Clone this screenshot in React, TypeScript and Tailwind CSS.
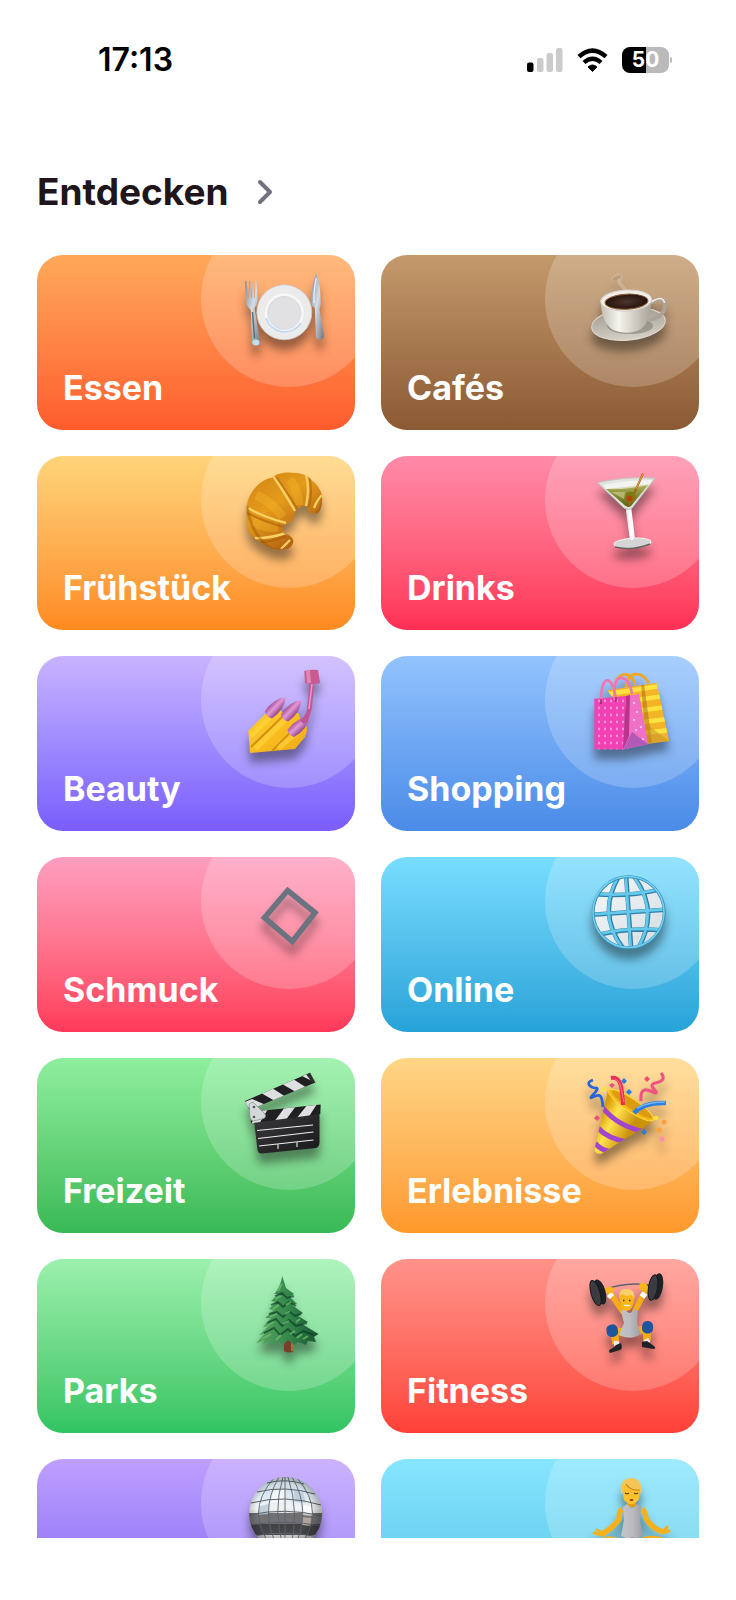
import type { ReactNode } from "react";

function SharedPaints() {
  return (
    <svg className="absolute size-0" aria-hidden="true">
      <defs>
        <linearGradient id="steel" x1="0" y1="0" x2="1" y2="1">
          <stop offset="0" stopColor="#7c8795" />
          <stop offset=".45" stopColor="#d3dde8" />
          <stop offset="1" stopColor="#6d7580" />
        </linearGradient>
        <linearGradient id="china" x1="0" y1="0" x2="1" y2="0">
          <stop offset="0" stopColor="#c3beb4" />
          <stop offset=".35" stopColor="#f6f4ef" />
          <stop offset="1" stopColor="#a8a297" />
        </linearGradient>
        <linearGradient id="saucer" x1="0" y1="0" x2="0" y2="1">
          <stop offset="0" stopColor="#a09a8e" />
          <stop offset="1" stopColor="#d6d2c8" />
        </linearGradient>
        <radialGradient id="coffee">
          <stop offset="0" stopColor="#4f352c" />
          <stop offset="1" stopColor="#24130d" />
        </radialGradient>
        <linearGradient id="crust" x1="0" y1="0" x2=".7" y2="1">
          <stop offset="0" stopColor="#cf8314" />
          <stop offset=".45" stopColor="#e59b1b" />
          <stop offset="1" stopColor="#a9580f" />
        </linearGradient>
        <linearGradient id="gin" x1="0" y1="0" x2="0" y2="1">
          <stop offset="0" stopColor="#b3b65c" />
          <stop offset="1" stopColor="#5c5f10" />
        </linearGradient>
        <linearGradient id="glass" x1="0" y1="0" x2="1" y2="0">
          <stop offset="0" stopColor="#aab0ae" />
          <stop offset=".5" stopColor="#ffffff" />
          <stop offset="1" stopColor="#a5aba9" />
        </linearGradient>
        <linearGradient id="nail" x1="0" y1="0" x2="0" y2="1">
          <stop offset="0" stopColor="#a64f98" />
          <stop offset=".45" stopColor="#e09ad6" />
          <stop offset="1" stopColor="#94438d" />
        </linearGradient>
        <linearGradient id="skin" x1="0" y1="0" x2="1" y2="1">
          <stop offset="0" stopColor="#ffd12e" />
          <stop offset="1" stopColor="#f0a914" />
        </linearGradient>
        <pattern id="dots" width="6" height="7" patternUnits="userSpaceOnUse">
          <rect width="6" height="7" fill="#f241b4" />
          <ellipse cx="3" cy="3" rx="1" ry="1.4" fill="#ff9bdc" />
        </pattern>
        <linearGradient id="globe" x1="0" y1="0" x2="1" y2="1">
          <stop offset="0" stopColor="#f5f8fa" />
          <stop offset="1" stopColor="#d5dde2" />
        </linearGradient>
        <linearGradient id="cone" gradientUnits="userSpaceOnUse" x1="16" y1="50" x2="46" y2="66">
          <stop offset="0" stopColor="#d99a08" />
          <stop offset=".4" stopColor="#ffe34f" />
          <stop offset="1" stopColor="#cb930c" />
        </linearGradient>
        <linearGradient id="tree" x1="0" y1="0" x2="1" y2="0">
          <stop offset="0" stopColor="#5aa862" />
          <stop offset=".5" stopColor="#35894c" />
          <stop offset="1" stopColor="#175531" />
        </linearGradient>
        <linearGradient id="slate" x1="0" y1="0" x2="1" y2="1">
          <stop offset="0" stopColor="#3a393c" />
          <stop offset="1" stopColor="#19191b" />
        </linearGradient>
        <linearGradient id="mirror" x1="0" y1="0" x2="0" y2="1">
          <stop offset="0" stopColor="#c3d0d8" />
          <stop offset=".25" stopColor="#dce9f2" />
          <stop offset=".43" stopColor="#f2f3f4" />
          <stop offset=".49" stopColor="#dfe2e4" />
          <stop offset=".5" stopColor="#6f6f72" />
          <stop offset=".64" stopColor="#727276" />
          <stop offset=".65" stopColor="#414144" />
          <stop offset=".79" stopColor="#4a4a4d" />
          <stop offset=".8" stopColor="#c9c9cb" />
          <stop offset="1" stopColor="#99999c" />
        </linearGradient>
        <radialGradient id="ballShade" cx=".47" cy=".46">
          <stop offset=".75" stopColor="#000" stopOpacity="0" />
          <stop offset="1" stopColor="#000" stopOpacity=".25" />
        </radialGradient>
        <linearGradient id="vest" x1="0" y1="0" x2="1" y2="0">
          <stop offset="0" stopColor="#c3c3c8" />
          <stop offset=".5" stopColor="#bbbbc0" />
          <stop offset="1" stopColor="#9c9ca2" />
        </linearGradient>
        <clipPath id="globeClip">
          <circle cx="44.7" cy="48.3" r="36" />
        </clipPath>
        <clipPath id="ballClip">
          <circle cx="45.6" cy="47.5" r="36.5" />
        </clipPath>
        <clipPath id="armClip">
          <path d="M5 36 70 7.7 75.3 17.5 9.5 45Z" />
        </clipPath>
        <clipPath id="barClip">
          <path d="M10 47 80.7 39.5 80.3 49 11 58.3Z" />
        </clipPath>
        <clipPath id="coneClip">
          <path d="M24 25 10.500 84Q11 89 17 89L70 56Z" />
        </clipPath>
        <clipPath id="yellowClip">
          <path d="M23.300 27.300 72.700 19.700 85 78 62 81Z" />
        </clipPath>
        <clipPath id="croissantClip">
          <path d="M6.700 43.700C9 27 22 16 31.700 14.700C37 10 46 9 51.700 9.700C62 9 70 14 73.300 18.700C80 24 83 32 82 37C82 46 79 50 76.700 50.300C70 52 67 48 68 44C63 41 57 46 55 48.700C55 56 50 61 43.300 62C42 66 44 70 44 71C49 71 54 75 53.300 78.700C52 85 48 86 45 86.300C36 88 25 83 20 78.700C8 73 5 65 6.700 43.700Z" />
        </clipPath>
      </defs>
    </svg>
  );
}

const dinner = (
  <>
    <path d="M5 19.500 6.300 19 8.300 36 8.800 36 9 19 10.200 19 11.200 36 11.800 36 12.500 19 13.700 19 14.300 36 14.900 36 15.400 19.200 16.500 19.500 17.800 38Q17 43 14.500 46L20 79Q20.500 83.500 16.500 83.800 12 84 12 80L10.800 48Q6.800 45 6.200 39Z" fill="url(#steel)" />
    <path d="M12.500 50 14.500 76" stroke="#606b78" strokeWidth="1.500" />
    <ellipse cx="16" cy="80.500" rx="3.600" ry="3" fill="#c7dbee" />
    <circle cx="44.300" cy="50.300" r="27.500" fill="#ecebec" stroke="#c9c7c8" strokeWidth=".8" />
    <circle cx="44.300" cy="51" r="19.500" fill="#f7f7f7" />
    <circle cx="44.300" cy="51" r="16.500" fill="#e1e0e2" stroke="#d5dbe2" />
    <path d="M26 56a19.500 19.500 0 0 0 35 5" fill="none" stroke="#bcd6ee" strokeWidth="1.500" />
    <path d="M76.700 11.300Q80.500 23 80.800 42L79.500 47 83.800 73Q84 77.500 80 77.500 76 77.500 76 74L74.800 46 71.500 43Q71 20 76.700 11.300Z" fill="url(#steel)" />
    <path d="M76.300 16Q73.500 28 74 41" fill="none" stroke="#eef3f8" strokeWidth="1.200" />
  </>
);

const coffee = (
  <>
    <path d="M29 17Q34 11 37 15 33 20 38 24T42 32" fill="none" stroke="#e9ded2" strokeWidth="3.500" strokeLinecap="round" opacity=".28" />
    <path d="M30 17q3-3 6-2" fill="none" stroke="#6f5b4a" strokeWidth="3" strokeLinecap="round" opacity=".25" />
    <ellipse cx="44.500" cy="62" rx="37" ry="16" fill="url(#saucer)" stroke="#dedad1" transform="rotate(-6 44.500 62)" />
    <ellipse cx="46" cy="64" rx="23" ry="8" fill="#6f695e" opacity=".45" />
    <path d="M67 41Q80 33 81 42 81 55 65 58" fill="none" stroke="#a9a399" strokeWidth="3.600" />
    <path d="M67 40Q79 32.500 80.500 41" fill="none" stroke="#f2efe9" strokeWidth="1.500" />
    <path d="M16.800 39Q17 60 29 68 44 74 57 67 67 60 67.500 37Z" fill="url(#china)" />
    <ellipse cx="42.200" cy="38.500" rx="25.500" ry="10.500" fill="#f1eee9" stroke="#d3cec5" transform="rotate(-3 42.200 38.500)" />
    <ellipse cx="42.500" cy="39.700" rx="21.500" ry="7.500" fill="url(#coffee)" stroke="#8b5e35" transform="rotate(-3 42.500 39.700)" />
  </>
);

const croissant = (
  <>
    <path d="M6.700 43.700C9 27 22 16 31.700 14.700C37 10 46 9 51.700 9.700C62 9 70 14 73.300 18.700C80 24 83 32 82 37C82 46 79 50 76.700 50.300C70 52 67 48 68 44C63 41 57 46 55 48.700C55 56 50 61 43.300 62C42 66 44 70 44 71C49 71 54 75 53.300 78.700C52 85 48 86 45 86.300C36 88 25 83 20 78.700C8 73 5 65 6.700 43.700Z" fill="url(#crust)" />
    <g clipPath="url(#croissantClip)" fill="none">
      <path d="M16 32Q30 38 43 54M50 16Q58 28 59 42M13 58Q24 66 38 64" stroke="#ffc12e" strokeWidth="9" opacity=".28" />
      <path d="M36 14Q46 27 58 47M7 50Q25 59 44 64M69 13Q73 28 69 44M21 79Q32 79 46 73" stroke="#a65a0b" strokeWidth="2" opacity=".55" />
      <path d="M33 13Q43 27 55 48M8 45Q23 54 46 60M66 12Q70 25 66 43M15 75Q27 76 46 70M82 32Q77 37 74 45M41 86 50 77" stroke="#f8cf62" strokeWidth="2.400" />
      <path d="M7 43Q10 65 22 78T44 86M76 50Q83 45 82 35" stroke="#8c480a" strokeWidth="3" opacity=".35" />
    </g>
  </>
);

const martini = (
  <>
    <path d="M43 44Q47 43 47.500 47L51 76Q67 76 67 79 66 84 49 85 30 86 30 82 32 78 46 77L42 48Z" fill="url(#glass)" />
    <ellipse cx="48.500" cy="80" rx="18.500" ry="4.800" fill="#d4d5d4" stroke="#f1f1f1" transform="rotate(-4 48.500 80)" />
    <path d="M31 84Q48 88 66 81" fill="none" stroke="#61625f" strokeWidth="1.500" />
    <path d="M48 77 45.500 48" stroke="#fff" strokeWidth="2.500" />
    <path d="M13.700 19.700Q42 13 71 15.300L48 45Q45 48 40 45Z" fill="#e0e6df" stroke="#bdc5c0" />
    <path d="M22 26Q45 24 65 21L47 43Q44 45 41 42.500Z" fill="url(#gin)" />
    <path d="M19 22Q42 17 68 17L65 22Q43 27 22 26Z" fill="#fff" opacity=".55" />
    <path d="M27 29 41 29 40 36Z" fill="#d6d79b" opacity=".55" />
    <path d="M59 10.500 45 42" stroke="#a86510" strokeWidth="2" />
    <path d="M59 10.500 52 26" stroke="#e8a54a" strokeWidth="1" />
    <circle cx="46.500" cy="34" r="5.500" fill="#7d7c14" />
    <circle cx="45.500" cy="35.500" r="3" fill="#bf3f0b" />
  </>
);

const nails = (
  <>
    <path d="M8.300 67.700 27 49Q38 42 43 50L49 49Q61 47 60 57L65 60Q69 66 65 74L55 86 10 90Z" fill="url(#skin)" />
    <path d="M11 84 43 53M32 88Q46 74 57 62" stroke="#c07b08" strokeWidth="1.800" fill="none" opacity=".7" />
    <path d="M12 72 31 53M17 84 45 57M40 84 59 68" stroke="#ffd73d" strokeWidth="5" strokeLinecap="round" opacity=".6" />
    {[[36, 44, -46], [52, 47, -47], [59, 63, -42]].map(([x, y, a]) => (
      <g key={x} transform={`rotate(${a} ${x} ${y})`}>
        <path d={`M${x - 11} ${y - 5}Q${x + 4} ${y - 8} ${x + 14} ${y}Q${x + 4} ${y + 8} ${x - 11} ${y + 5}Q${x - 14} ${y} ${x - 11} ${y - 5}Z`} fill="url(#nail)" />
      </g>
    ))}
    <path d="M69.500 20H74L72 45 68 58Q64 64 60 57 66 53 67 46Z" fill="#c1559a" />
    <path d="M72 21 69 46" stroke="#e99bc8" strokeWidth="1.500" />
    <path d="M64.300 8Q72 6 78 7L80 20Q72 22 65 20Z" fill="#c95a91" />
    <path d="M66 8 67 20H71L70 7Z" fill="#e185b0" />
  </>
);

const bags = (
  <>
    <path d="M30 28C30 11 43 8 48 15S50 24 50 23M42 25C43 8 57 7 65 20" fill="none" stroke="#f1a726" strokeWidth="2.800" />
    <path d="M23.300 27.300 72.700 19.700 85 78 62 81Z" fill="#f3b42a" />
    <g clipPath="url(#yellowClip)">
      <path d="M24 31 76 23M24 41 80 33M24 52 82 44M24 63 84 56M24 74 86 67" stroke="#ffe13f" strokeWidth="4.500" />
      <path d="M57 21 62 81 68 79 60 21Z" fill="#9f6004" opacity=".45" />
    </g>
    <path d="M62 81 65 63 85 78Z" fill="#c49227" opacity=".5" />
    <path d="M10.300 35.700 42 33 39 86.500 10.300 86.300Z" fill="url(#dots)" />
    <path d="M42 33 55 31 64.300 81.300 39 86.500Z" fill="#f070c5" />
    <path d="M42 33 46 32 45 73 39 86.500Z" fill="#a81f79" opacity=".75" />
    <path d="M39 86.500 48 69 64.300 81.300Z" fill="#b35ab6" />
    <path d="M17 39C17 10 29 11 32 37M31 37C27 7 45 10 48 31" fill="none" stroke="#f174b4" strokeWidth="2.600" />
    <path d="M17 36v5M32 34v5" stroke="#851a5b" strokeWidth="1.200" />
    {[[50, 40], [53, 49], [50, 57], [57, 64], [52, 67], [59, 76]].map(([x, y]) => (
      <circle key={y} cx={x} cy={y} r="1.200" fill="#ffc0e8" />
    ))}
  </>
);

const diamond = <path d="M47.600 26.500 75 48.700 52.300 77.500 24.500 53.700Z" fill="none" stroke="#6b7280" strokeWidth="5.500" />;

const globe = (
  <>
    <circle cx="44.700" cy="48.300" r="36" fill="url(#globe)" />
    <g clipPath="url(#globeClip)" fill="none">
      <g transform="rotate(-4 44.700 48.300)">
        <path d="M8 48.300H81M44.700 11V86M13 28Q45 33 76 28M13 68.500Q45 63.500 76 68.500M38 11Q12 48 38 86M51 11Q77 48 51 86" stroke="#2f7fa5" strokeWidth="4.500" />
        <path d="M8 47.800H81M44.200 11V86M13 27.500Q45 32.500 76 27.500M13 68Q45 63 76 68M37.500 11Q11.500 48 37.500 86M50.500 11Q76.500 48 50.500 86" stroke="#65c9ec" strokeWidth="2.800" />
      </g>
    </g>
    <circle cx="44.700" cy="48.300" r="35.500" fill="none" stroke="#3990b8" strokeWidth="3" />
    <circle cx="44.500" cy="48" r="35.500" fill="none" stroke="#70d0f0" strokeWidth="1.600" />
  </>
);

const clapper = (
  <>
    <path d="M14 56 79.500 48 79.500 78Q79 82 76 83L22 88.500Q18 88.500 17.500 85Z" fill="url(#slate)" />
    <g clipPath="url(#armClip)">
      <rect width="90" height="50" fill="#202022" />
      <path d="M3 38 12 34 26 40 14 47ZM21 28 32 23 46 32 35 36ZM42 19 53 14 67 23 56 27ZM62 11 69 8 79 15 76 18Z" fill="#dedfe1" />
      <path d="M66 9 70 7 77 18 73 19Z" fill="#2c2c2f" />
    </g>
    <g clipPath="url(#barClip)">
      <rect y="35" width="90" height="30" fill="#202022" />
      <path d="M11 59 19 45 28 44 19 59ZM34 57 45 42 56 41 45 56ZM56 54 68 39 77 39 68 53Z" fill="#dedfe1" />
    </g>
    <path d="M9 39 13 37 25 49Q27 53 22 54L13 56Q10 55 10 52Z" fill="#d4d7d9" stroke="#85898c" strokeWidth=".7" />
    <circle cx="14" cy="42" r="1.300" fill="#55595c" />
    <circle cx="14" cy="52" r="1.300" fill="#55595c" />
    <path d="M17 65.500 73 60M18 73.500 73.500 67M19 81 73.500 75M38 79v5M57 77v5" stroke="#eee" strokeWidth="1.100" />
  </>
);

const party = (
  <>
    <path d="M24 25 10.500 84Q11 89 17 89L70 56Z" fill="url(#cone)" />
    <g clipPath="url(#coneClip)" fill="none" stroke="#a145ce" strokeWidth="5">
      <path d="M18 42Q34 62 62 67M14 63Q24 74 44 77M11 78Q16 85 28 87" />
    </g>
    <ellipse cx="47" cy="40" rx="27" ry="6.500" fill="#f3b914" stroke="#ffd94a" transform="rotate(34 47 40)" />
    <ellipse cx="48" cy="39.500" rx="24" ry="4.500" fill="#dd9b12" transform="rotate(34 48 39.500)" />
    <path d="M27 13C37 11 38 22 39 40" fill="none" stroke="#e92f56" strokeWidth="4" />
    <path d="M31 14C38 16 37 28 40 37" fill="none" stroke="#ff7994" strokeWidth="1" />
    <path d="M50 48Q60 37 82 38" fill="none" stroke="#2c80df" strokeWidth="4.500" />
    <path d="M53 43Q64 37 81 37" fill="none" stroke="#77b4fa" strokeWidth="1.500" />
    <path d="M9 15C-2 19 11 24 12 23 18 23 1 36 9 32S18 31 19 42" fill="none" stroke="#2965d6" strokeWidth="2.800" />
    <path d="M77 8C84 17 72 17 69 19 65 22 76 28 71 28 61 23 56 23 57 36" fill="none" stroke="#ee5480" strokeWidth="3.200" />
    <path d="M40 13 43 16 40 19 37 16ZM45 24 48 27 45 30 42 27ZM60 64 63 67 60 70 57 67Z" fill="#297ddb" />
    <path d="M28 18 31 20 28 23 25 20ZM63 11 66 14 63 17 60 14ZM13 50 16 53 13 56 10 53Z" fill="#ed4e74" />
    <circle cx="20" cy="24" r="2.300" fill="#ffe13c" />
    <circle cx="72" cy="53" r="2.300" fill="#ffe13c" />
    <circle cx="80" cy="57" r="2.600" fill="#ff9f43" />
    <circle cx="75" cy="65" r="2.600" fill="#ffa436" />
    <circle cx="78" cy="74" r="2.600" fill="#fb8fad" />
  </>
);

const tree = (
  <>
    <path d="M44 70h10v15q-5 3-10 0Z" fill="#753f29" />
    <path d="M51 73h3v12h-3Z" fill="#b26845" />
    <path d="M42.300 10 46 22 54 28 50 31 57 38 52 39 63 47 58 50 68 56 62 58 78.500 68 74 71 76 76 68 75 66 79 58 76 54 79 48 74 44 78 38 75 34 79 29 76 22 78 25 74 16 77.500Q22 70 25 68L19 69 29 60 23 61 31 52 25 52 34 44 29 43 36 36 31 35 38 28 34 28Q40 22 42.300 10Z" fill="url(#tree)" />
    <path d="M35 30 42 27 47 32 54 30M31 39 38 36 43 41 49 36 56 40M29 48 37 46 43 51 49 45 55 50 61 48M27 57 36 53 42 60 49 54 56 60 67 57M24 67 34 62 40 69 48 63 55 70 63 65 74 69" stroke="#0b3c23" strokeWidth="1.900" fill="none" opacity=".65" />
    <path d="M38 25 42 18M35 33 41 30M33 43 39 39M46 39 51 36M30 51 37 48M45 48 50 45M27 60 34 56M43 58 49 55M22 73 31 68M36 74 41 69M50 68 55 65M57 72 62 68M56 56 60 53M63 73 68 70" stroke="#6dba6c" strokeWidth="1.900" opacity=".8" />
  </>
);

const lifter = (
  <>
    <path d="M16 25Q44 14 70 20" fill="none" stroke="#5d6270" strokeWidth="1.500" />
    <path d="M24 24 39 46M62 23 51 45" stroke="#f5ad17" strokeWidth="5.500" strokeLinecap="round" />
    <path d="M25 28 28 31M61 27 58 31" stroke="#fff" strokeWidth="6" />
    <rect x="21" y="21" width="9" height="6" rx="3" fill="#f8b61b" />
    <rect x="55" y="17" width="8" height="7" rx="3" fill="#f8b61b" />
    <path d="M40 66 30 65 32 78M52 65 63 63 63 75" fill="none" stroke="#f5ad17" strokeWidth="7.500" strokeLinejoin="round" />
    <path d="M37 45 41 43Q46 51 50 43L54 45 53 57 57 68Q47 75 35 69L40 57Z" fill="url(#vest)" />
    <rect x="22.500" y="58.500" width="11.500" height="12.500" rx="5" fill="#1f559d" transform="rotate(-8 28 65)" />
    <rect x="58" y="55" width="11" height="12.500" rx="5" fill="#1f559d" transform="rotate(4 63 62)" />
    <path d="M32 75 33 81M62 73 64 77" stroke="#eee" strokeWidth="5" />
    <path d="M32 79 37 77Q39 83 36 84L26 87Q23 84 29 82ZM58 76 63 75 70 80Q73 83 69 83L58 81Z" fill="#222329" />
    <path d="M35.500 30Q36 24 43 24 50 25 50 32 50 44 43 45 36 44 35.500 30Z" fill="#f8b61b" />
    <path d="M35.500 32Q34 23 42 23 51 22 50.500 33 48 27 44 30 39 29 37 28Z" fill="#f7d06b" />
    <path d="M39 34.500h1.500M45 34.500h1.500" stroke="#4f2f16" strokeWidth="1.500" />
    <path d="M40 39.500h6" stroke="#fff" strokeWidth="1.200" />
    <g fill="#202126">
      <ellipse cx="16" cy="26" rx="5.500" ry="13" transform="rotate(-16 16 26)" />
      <ellipse cx="73.500" cy="20.500" rx="5.500" ry="13.500" transform="rotate(9 73.500 20.500)" />
    </g>
    <g fill="#3b3c42" stroke="#18191d">
      <ellipse cx="11.500" cy="27" rx="4.500" ry="13" transform="rotate(-16 11.500 27)" />
      <ellipse cx="69" cy="21.500" rx="4.500" ry="13" transform="rotate(9 69 21.500)" />
    </g>
  </>
);

const discoBall = (
  <>
    <circle cx="45.600" cy="47.500" r="36.500" fill="url(#mirror)" />
    <g clipPath="url(#ballClip)" fill="none">
      <path d="M33 25 45 23 45 36 31 37ZM63 39 73 41 73 50 62 49Z" fill="#fff" opacity=".65" />
      <path d="M54 24 63 26 66 37 55 36ZM20 40 29 38 28 48 18 49Z" fill="#b8c9d6" opacity=".8" />
      <path d="M62 51 72 52 71 60 62 59Z" fill="#b2a29a" />
      <path d="M27 17Q45 12 64 18M17 26Q45 19 75 28M11 37Q45 28 81 39M9 49Q45 41 82 50M9 59Q45 53 82 60M12 70Q45 64 80 71M19 79Q45 73 73 79" stroke="#5b626b" />
      <path d="M43 11Q32 46 44 84M48 11Q60 46 50 84M45 11V84M39 11Q18 46 39 84M52 11Q73 46 53 84M34 12Q3 47 34 84M57 12Q88 47 57 84" stroke="#5b626b" strokeWidth=".9" />
    </g>
    <circle cx="45.600" cy="47.500" r="36.500" fill="url(#ballShade)" />
  </>
);

const yogi = (
  <>
    <path d="M18 72Q12 88 45 88T80 72Q65 67 56 73L36 73Q25 68 18 72Z" fill="#f6b01c" />
    <path d="M38 43Q35 45 35 53 30 61 18 68M58 43Q61 45 62 52 67 62 79 66" fill="none" stroke="#f6b01c" strokeWidth="5.500" strokeLinejoin="round" />
    <path d="M18 69 10 67M20 68 13 64M79 66 83 61M78 67 85 65" stroke="#f6b01c" strokeWidth="3" strokeLinecap="round" />
    <path d="M43 32h9v9h-9Z" fill="#e49b10" />
    <path d="M39 41 43 38Q48 45 53 38L57 41 56 54 59 70Q48 76 37 70L40 54Z" fill="url(#vest)" />
    <path d="M42 73Q48 70 55 73L52 79H44Z" fill="#777a83" />
    <path d="M38 23Q38 13 48 13 57 14 56 24L55 33Q48 43 40 34Z" fill="#ffc12f" />
    <path d="M37.500 29Q34 13 47 12 60 12 57 30L56 24Q47 25 42 18 39 19 39 25Z" fill="#f4c65a" />
    <path d="M42 18Q46 25 56 24" fill="none" stroke="#c98717" strokeWidth="1.200" />
    <path d="M41 27q2 1.500 4 0M50 27q2 1.500 4 0" fill="none" stroke="#60400e" strokeWidth="1.200" />
    <ellipse cx="47.500" cy="34" rx="2" ry="1" fill="#8f3f24" />
  </>
);

type Category = { name: string; fill: string; art: ReactNode; iconOnly?: boolean };

const categories: Category[] = [
  { name: "Essen", fill: "from-[#ffa85a] to-[#ff5a2d]", art: dinner },
  { name: "Cafés", fill: "from-[#c49a6c] to-[#8b5a33]", art: coffee },
  { name: "Frühstück", fill: "from-[#ffd479] to-[#ff8a1e]", art: croissant },
  { name: "Drinks", fill: "from-[#ff8aa9] to-[#ff2d55]", art: martini },
  { name: "Beauty", fill: "from-[#c9b3ff] to-[#7a5cfc]", art: nails },
  { name: "Shopping", fill: "from-[#92c3fd] to-[#4a8be8]", art: bags },
  { name: "Schmuck", fill: "from-[#ff9ec0] to-[#ff3859]", art: diamond },
  { name: "Online", fill: "from-[#78ddff] to-[#25a3d8]", art: globe },
  { name: "Freizeit", fill: "from-[#8eef9f] to-[#38b955]", art: clapper },
  { name: "Erlebnisse", fill: "from-[#ffd685] to-[#ff9829]", art: party },
  { name: "Parks", fill: "from-[#9bf0ad] to-[#30c462]", art: tree },
  { name: "Fitness", fill: "from-[#ff928a] to-[#ff3f37]", art: lifter },
  { name: "Party", fill: "from-[#bf9fff] to-[#7b5cf0]", art: discoBall, iconOnly: true },
  { name: "Wellness", fill: "from-[#87e5ff] to-[#4bc0e2]", art: yogi, iconOnly: true },
];

function CategoryCard({ name, fill, art, iconOnly }: Category) {
  return (
    <a href="#" aria-label={name} className={`relative flex aspect-[91/50] items-end overflow-hidden rounded-[26px] bg-linear-to-b px-[26px] pb-5 ${fill}`}>
      <span className="absolute -top-11 -right-[22px] size-44 rounded-full bg-white/20" />
      <svg viewBox="0 0 90 90" aria-hidden="true" className="absolute top-[7px] right-[25px] size-[90px] overflow-visible drop-shadow-[0_10px_5px_rgba(0,0,0,0.4)]">
        {art}
      </svg>
      {!iconOnly && <span className="relative text-[34px] leading-[44px] font-bold text-white">{name}</span>}
    </a>
  );
}

function StatusBar() {
  return (
    <header className="flex h-[120px] shrink-0 items-center justify-between pr-16 pl-[98px] font-semibold text-black">
      <time className="text-[32px] leading-10">17:13</time>
      <div className="flex items-center gap-[14px]">
        <svg width="36" height="24" viewBox="0 0 36 24" role="img" aria-label="Signal">
          <rect y="14.500" width="6.500" height="9.500" rx="2" fill="#000" />
          <g fill="#cbcbcb">
            <rect x="10" y="10" width="6.500" height="14" rx="2" />
            <rect x="19.500" y="5" width="6.500" height="19" rx="2" />
            <rect x="29" width="6.500" height="24" rx="2" />
          </g>
        </svg>
        <svg width="31" height="24" viewBox="0 0 31 24" role="img" aria-label="WLAN">
          <path d="M15.500 23.500 11 19Q15.500 15 20 19Z" fill="#000" stroke="#000" strokeLinejoin="round" />
          <path d="M7 14.500Q15.500 7 24 14.500" fill="none" stroke="#000" strokeWidth="4.300" />
          <path d="M2 8.700Q15.500-3.500 29 8.700" fill="none" stroke="#000" strokeWidth="4.500" />
        </svg>
        <div className="flex items-center gap-px">
          <div className="flex h-[26px] w-[47px] items-center justify-center rounded-[8px] bg-linear-to-r from-black from-50% to-[#bababa] to-50% text-[21px] leading-[26px] font-bold text-white">50</div>
          <span className="h-[6px] w-[2px] rounded-r-full bg-[#bababa]" />
        </div>
      </div>
    </header>
  );
}

export default function App() {
  return (
    <div className="flex h-screen flex-col bg-white pb-[62px] font-['Inter','Liberation_Sans',sans-serif]">
      <SharedPaints />
      <StatusBar />
      <main className="min-h-0 flex-1 overflow-y-auto px-[37px] [scrollbar-width:none]">
        <h1 className="flex h-[135px] items-center pt-2 text-[37px] leading-[48px] font-bold text-[#20151a]">
          <a href="#" className="flex items-center gap-[28px]">
            Entdecken
            <svg width="16" height="26" viewBox="0 0 16 26" aria-hidden="true" fill="none" stroke="#70717f" strokeWidth="4" strokeLinecap="round" strokeLinejoin="round">
              <path d="M3 3 13 13 3 23" />
            </svg>
          </a>
        </h1>
        <div className="grid grid-cols-2 gap-[26px]">
          {categories.map((category) => (
            <CategoryCard key={category.name} {...category} />
          ))}
        </div>
      </main>
    </div>
  );
}
